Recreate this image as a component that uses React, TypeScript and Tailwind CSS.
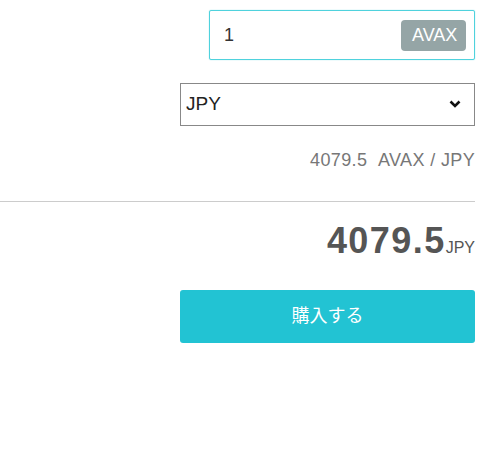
import React from 'react';

const font = { fontFamily: '"Liberation Sans", Arial, "Noto Sans CJK JP", sans-serif' };

// 購入フォーム
const App = () => {
  return (
    <div className="min-h-screen bg-white pt-[10px] pr-[25px]" style={font}>
      <div className="flex justify-end">
        <div className="flex h-[50px] w-[266px] items-center rounded-[2px] border border-[#4fd2dd] pl-[14px] pr-[8px] shadow-[0_0_1px_#4fd2dd]">
          <input
            readOnly
            value="1"
            className="w-full bg-transparent text-[18px] text-[#333] outline-none"
          />
          <span className="flex h-[31px] w-[65px] shrink-0 items-center rounded-[4px] bg-[#95a5a6] pl-[11px] text-[18px] text-white">
            AVAX
          </span>
        </div>
      </div>

      <div className="mt-[23px] flex justify-end">
        <div className="relative w-[295px]">
          <select className="h-[43px] w-full appearance-none rounded-none border border-[#888] bg-white pl-[5px] text-[19px] text-[#222] outline-none">
            <option>JPY</option>
          </select>
          <svg
            className="pointer-events-none absolute right-[14px] top-[17px]"
            width="12"
            height="9"
            viewBox="0 0 12 9"
          >
            <path d="M1.5 1.5 L6 6 L10.5 1.5" fill="none" stroke="#111" strokeWidth="2.6" />
          </svg>
        </div>
      </div>

      <p className="mt-[22px] text-right text-[18px] leading-[24px] tracking-[0.02em] text-[#777]">
        4079.5&nbsp;&nbsp;AVAX / JPY
      </p>

      <hr className="mt-[29px] border-0 border-t border-[#cccccc]" />

      <div className="mt-[21px] flex items-baseline justify-end text-[#555]">
        <span className="text-[36px] leading-[36px] font-bold tracking-[0.04em]">4079.5</span>
        <span className="text-[16px]">JPY</span>
      </div>

      <div className="mt-[30px] flex justify-end">
        <button className="flex h-[53px] w-[295px] items-center justify-center rounded-[3px] bg-[#22c3d3] text-[18px] text-white">
          購入する
        </button>
      </div>
    </div>
  );
};

export default App;
